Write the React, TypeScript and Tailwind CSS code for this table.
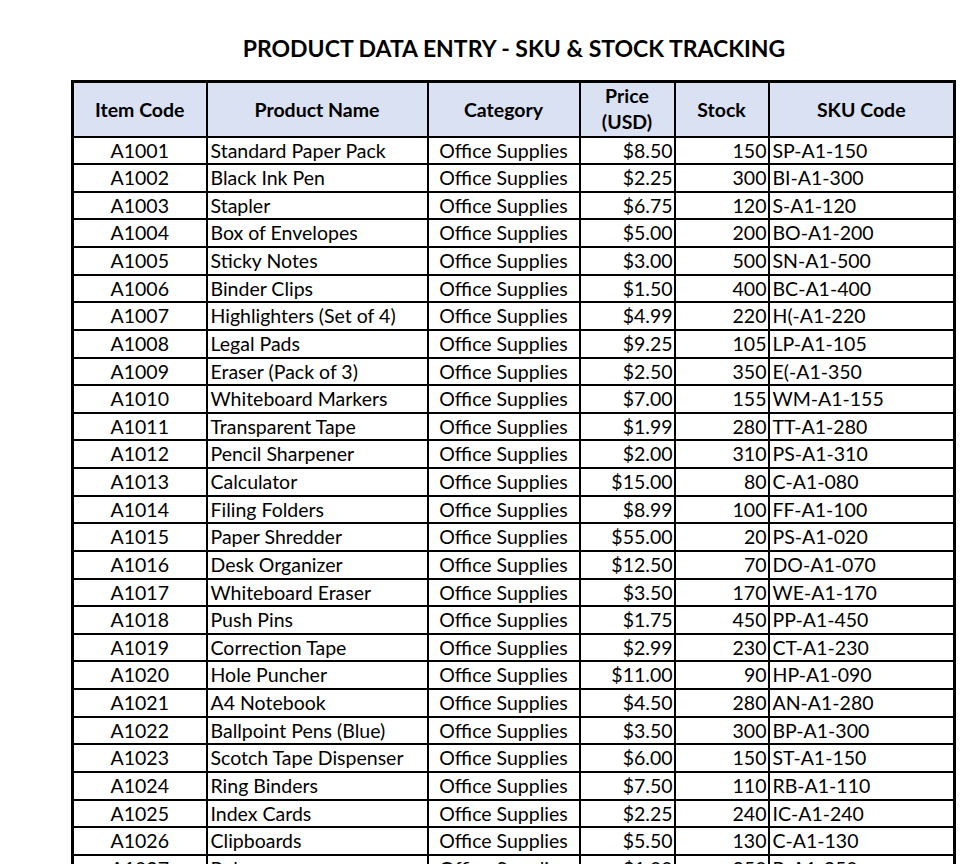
const rows: [string, string, string, string, number, string][] = [
  ["A1001", "Standard Paper Pack", "Office Supplies", "$8.50", 150, "SP-A1-150"],
  ["A1002", "Black Ink Pen", "Office Supplies", "$2.25", 300, "BI-A1-300"],
  ["A1003", "Stapler", "Office Supplies", "$6.75", 120, "S-A1-120"],
  ["A1004", "Box of Envelopes", "Office Supplies", "$5.00", 200, "BO-A1-200"],
  ["A1005", "Sticky Notes", "Office Supplies", "$3.00", 500, "SN-A1-500"],
  ["A1006", "Binder Clips", "Office Supplies", "$1.50", 400, "BC-A1-400"],
  ["A1007", "Highlighters (Set of 4)", "Office Supplies", "$4.99", 220, "H(-A1-220"],
  ["A1008", "Legal Pads", "Office Supplies", "$9.25", 105, "LP-A1-105"],
  ["A1009", "Eraser (Pack of 3)", "Office Supplies", "$2.50", 350, "E(-A1-350"],
  ["A1010", "Whiteboard Markers", "Office Supplies", "$7.00", 155, "WM-A1-155"],
  ["A1011", "Transparent Tape", "Office Supplies", "$1.99", 280, "TT-A1-280"],
  ["A1012", "Pencil Sharpener", "Office Supplies", "$2.00", 310, "PS-A1-310"],
  ["A1013", "Calculator", "Office Supplies", "$15.00", 80, "C-A1-080"],
  ["A1014", "Filing Folders", "Office Supplies", "$8.99", 100, "FF-A1-100"],
  ["A1015", "Paper Shredder", "Office Supplies", "$55.00", 20, "PS-A1-020"],
  ["A1016", "Desk Organizer", "Office Supplies", "$12.50", 70, "DO-A1-070"],
  ["A1017", "Whiteboard Eraser", "Office Supplies", "$3.50", 170, "WE-A1-170"],
  ["A1018", "Push Pins", "Office Supplies", "$1.75", 450, "PP-A1-450"],
  ["A1019", "Correction Tape", "Office Supplies", "$2.99", 230, "CT-A1-230"],
  ["A1020", "Hole Puncher", "Office Supplies", "$11.00", 90, "HP-A1-090"],
  ["A1021", "A4 Notebook", "Office Supplies", "$4.50", 280, "AN-A1-280"],
  ["A1022", "Ballpoint Pens (Blue)", "Office Supplies", "$3.50", 300, "BP-A1-300"],
  ["A1023", "Scotch Tape Dispenser", "Office Supplies", "$6.00", 150, "ST-A1-150"],
  ["A1024", "Ring Binders", "Office Supplies", "$7.50", 110, "RB-A1-110"],
  ["A1025", "Index Cards", "Office Supplies", "$2.25", 240, "IC-A1-240"],
  ["A1026", "Clipboards", "Office Supplies", "$5.50", 130, "C-A1-130"],
  ["A1027", "Rulers", "Office Supplies", "$1.00", 250, "R-A1-250"],
];

export default function App() {
  return (
    <div
      className="w-[960px] h-[864px] overflow-hidden bg-white text-black"
      style={{ fontFamily: "Lato, 'Liberation Sans', sans-serif" }}
    >
      <h1 className="pt-[34px] h-[80px] text-center text-[23px] font-bold leading-[28px] pl-[68px]">
        PRODUCT DATA ENTRY - SKU &amp; STOCK TRACKING
      </h1>
      <table className="ml-[71px] border-collapse border-[3px] border-black text-[19.5px] leading-none table-fixed">
        <colgroup>
          <col className="w-[134px]" />
          <col className="w-[221px]" />
          <col className="w-[152px]" />
          <col className="w-[95px]" />
          <col className="w-[94px]" />
          <col className="w-[186px]" />
        </colgroup>
        <thead>
          <tr className="h-[55px] bg-[#d9e1f2] font-bold">
            <th className="border-2 border-black">Item Code</th>
            <th className="border-2 border-black">Product Name</th>
            <th className="border-2 border-black">Category</th>
            <th className="border-2 border-black leading-[26px]">
              Price
              <br />
              (USD)
            </th>
            <th className="border-2 border-black">Stock</th>
            <th className="border-2 border-black">SKU Code</th>
          </tr>
        </thead>
        <tbody>
          {rows.map((r) => (
            <tr key={r[0]} className="h-[27.64px]">
              <td className="border-2 border-black text-center">{r[0]}</td>
              <td className="border-2 border-black pl-[3px] whitespace-nowrap">{r[1]}</td>
              <td className="border-2 border-black text-center">{r[2]}</td>
              <td className="border-2 border-black text-right pr-[1px]">{r[3]}</td>
              <td className="border-2 border-black text-right pr-[1px]">{r[4]}</td>
              <td className="border-2 border-black pl-[3px]">{r[5]}</td>
            </tr>
          ))}
        </tbody>
      </table>
    </div>
  );
}
